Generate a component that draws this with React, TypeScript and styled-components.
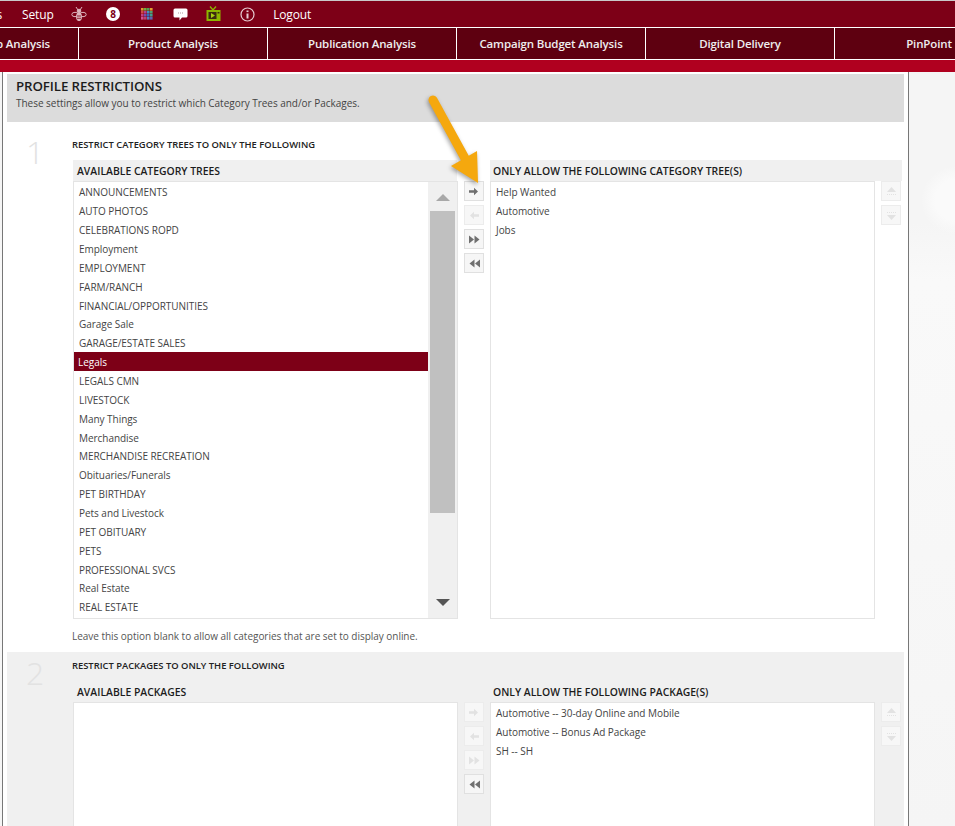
import { styled, createGlobalStyle } from "styled-components";

const GlobalStyle = createGlobalStyle`
    html, body {
        margin: 0;
        padding: 0;
        background: #fff;
        font-family: "Open Sans", "Noto Sans", sans-serif;
    }
    * {
        box-sizing: border-box;
    }
`;

const Page = styled.div`
    position: relative;
    width: 955px;
    height: 826px;
    overflow: hidden;
`;

const TopBar = styled.div`
    display: flex;
    align-items: center;
    height: 27px;
    border-top: 1px solid #c9c9c9;
    background: #7d0017;
    color: #fff;
    font-size: 12px;
    letter-spacing: -0.15px;
`;

const TopLink = styled.span<{ $start: number }>`
    margin-left: ${(p) => p.$start}px;
    white-space: nowrap;
`;

const IconRow = styled.div`
    display: grid;
    grid-auto-flow: column;
    grid-auto-columns: 33.6px;
    margin-left: 9px;
`;

const IconSlot = styled.div`
    display: flex;
    align-items: center;
    justify-content: center;
    height: 20px;
`;

const Badge = styled.span`
    display: flex;
    align-items: center;
    justify-content: center;
    width: 14px;
    height: 14px;
    border-radius: 50%;
    background: #fff;
    color: #7d0017;
    font-size: 10px;
    font-weight: 700;
`;

const NavBar = styled.div`
    display: flex;
    height: 33px;
    margin-left: -110px;
    border-top: 1px solid #fff;
    border-bottom: 1px solid #fff;
    background: #5e0010;
`;

const NavItem = styled.div`
    flex: 0 0 189px;
    display: flex;
    align-items: center;
    justify-content: center;
    border-right: 1px solid #fff;
    color: #eee;
    font-size: 11.5px;
    font-weight: 600;
    letter-spacing: -0.14px;
    white-space: nowrap;
`;

const RedStrip = styled.div`
    height: 12px;
    background: #b0001f;
`;

const Body = styled.div`
    display: flex;
    height: 754px;
    padding-left: 2px;
    background:
        radial-gradient(circle at 955px 128px, #fafafa 0, #fafafa 20px, rgba(250, 250, 250, 0) 34px),
        linear-gradient(180deg, #f5f5f5 0, #f5f5f5 150px, #f9f9f9 210px, #f5f5f5 100%);
`;

const Main = styled.main`
    flex: 0 0 907px;
    padding: 2px 4px 0;
    border-left: 1px solid #777;
    border-right: 1px solid #777;
    background: #fff;
`;

const Banner = styled.header`
    height: 48px;
    padding: 3px 9px 0;
    background: #dcdcdc;
`;

const BannerTitle = styled.h1`
    margin: 0;
    color: #1c1c1c;
    font-size: 13.3px;
    line-height: 19px;
    font-weight: 600;
    letter-spacing: -0.1px;
`;

const BannerText = styled.p`
    margin: 0;
    color: #444;
    font-size: 10px;
    line-height: 15px;
    letter-spacing: -0.03px;
`;

const Section = styled.section<{ $shaded?: boolean }>`
    display: grid;
    grid-template-columns: 65px 1fr;
    height: ${(p) => (p.$shaded ? "180px" : "530px")};
    padding-top: ${(p) => (p.$shaded ? "8px" : "17px")};
    background: ${(p) => (p.$shaded ? "#f0f0f0" : "#fff")};
`;

const StepNumber = styled.div`
    padding: 0 0 0 19px;
    color: #e2e2e2;
    font-size: 32px;
    line-height: 25px;
    font-weight: 300;
`;

const StepTitle = styled.h2<{ $gap: number }>`
    margin: 0 0 ${(p) => p.$gap}px;
    color: #222;
    font-size: 9.4px;
    line-height: 12px;
    font-weight: 600;
`;

const Transfer = styled.div`
    display: grid;
    grid-template-columns: 385px 32px 385px 27px;
    grid-template-rows: 21px auto;
    margin-left: 1px;
`;

const ColumnHeader = styled.div<{ $filled?: boolean; $wide?: boolean }>`
    grid-column: span 2;
    width: ${(p) => (p.$wide ? "412px" : "384px")};
    height: 21px;
    padding: 0 ${(p) => (p.$wide ? "3px" : "4px")};
    background: ${(p) => (p.$filled ? "#f0f0f0" : "transparent")};
    color: #1c1c1c;
    font-size: 10.4px;
    line-height: 23px;
    font-weight: 600;
`;

const ListBox = styled.div<{ $height: number }>`
    display: flex;
    height: ${(p) => p.$height}px;
    border: 1px solid #e4e4e4;
    background: #fff;
`;

const Items = styled.ul`
    flex: 1;
    margin: 0;
    padding: 0.4px 0 0;
    list-style: none;
`;

const Item = styled.li<{ $selected?: boolean }>`
    height: 18.87px;
    padding-left: ${(p) => (p.$selected ? "4px" : "5px")};
    background: ${(p) => (p.$selected ? "#7d0017" : "transparent")};
    color: ${(p) => (p.$selected ? "#fff" : "#444")};
    font-size: 10px;
    line-height: 20px;
    letter-spacing: -0.04px;
    white-space: nowrap;
`;

const Scrollbar = styled.div`
    flex: 0 0 29px;
    display: flex;
    flex-direction: column;
    background: #f0f0f0;
`;

const ScrollEnd = styled.div<{ $down?: boolean }>`
    flex: ${(p) => (p.$down ? "1" : "0 0 29px")};
    display: flex;
    align-items: ${(p) => (p.$down ? "flex-end" : "center")};
    justify-content: center;
    padding: ${(p) => (p.$down ? "0 0 12px 0" : "2px 0 0 0")};

    &::before {
        content: "";
        border-left: 7px solid transparent;
        border-right: 7px solid transparent;
        border-${(p) => (p.$down ? "top" : "bottom")}: 7px solid ${(p) => (p.$down ? "#555" : "#a8a8a8")};
    }
`;

const ScrollThumb = styled.div`
    flex: 0 0 302px;
    width: 25px;
    margin-left: 2px;
    background: #c0c0c0;
`;

const MoveColumn = styled.div`
    display: flex;
    flex-direction: column;
    gap: 4px;
    padding-left: 6px;
`;

const MoveButton = styled.button<{ $off?: boolean }>`
    display: flex;
    align-items: center;
    justify-content: center;
    width: 20px;
    height: 20px;
    padding: 0;
    border: 1px solid ${(p) => (p.$off ? "#ececec" : "#e0e0e0")};
    background: ${(p) => (p.$off ? "#f7f7f7" : "#f6f6f6")};
    color: ${(p) => (p.$off ? "#e2e2e2" : "#6f6f6f")};
`;

const Note = styled.p`
    margin: 10px 0 0;
    color: #555;
    font-size: 10px;
    line-height: 14px;
    letter-spacing: -0.03px;
`;

const Callout = styled.svg`
    position: absolute;
    left: 420px;
    top: 90px;
    width: 70px;
    height: 100px;
    filter: drop-shadow(-1px 2px 2px rgba(0, 0, 0, 0.35));
`;

type MoveKind = "right" | "left" | "allRight" | "allLeft" | "up" | "down";

const MoveIcon = ({ kind }: { kind: MoveKind }) => {
    const paths: Record<MoveKind, string> = {
        right: "M1 5.2h5V2.8L10 6.5l-4 3.7V7.8H1z",
        left: "M11 5.2H6V2.8L2 6.5l4 3.7V7.8h5z",
        allRight: "M1 2.5l5 4-5 4zM6.5 2.5l5 4-5 4z",
        allLeft: "M12 2.5l-5 4 5 4zM6.5 2.5l-5 4 5 4z",
        up: "M6.5 2l4.5 5H2zM2 9h1v1H2zM4 9h1v1H4zM6 9h1v1H6zM8 9h1v1H8zM10 9h1v1h-1z",
        down: "M6.5 11l4.5-5H2zM2 3h1v1H2zM4 3h1v1H4zM6 3h1v1H6zM8 3h1v1H8zM10 3h1v1h-1z",
    };
    return (
        <svg width="13" height="13" viewBox="0 0 13 13" fill="currentColor">
            <path d={paths[kind]} />
        </svg>
    );
};

const BeeIcon = () => (
    <svg width="16" height="16" viewBox="0 0 16 16" fill="none" stroke="#dcb4bc" strokeWidth="1">
        <path d="M5 1l2 3M11 1l-2 3" />
        <circle cx="8" cy="5" r="1.800" fill="#dcb4bc" />
        <ellipse cx="4" cy="8.500" rx="3.200" ry="2.200" />
        <ellipse cx="12" cy="8.500" rx="3.200" ry="2.200" />
        <ellipse cx="8" cy="10.800" rx="2.500" ry="4" fill="#dcb4bc" />
        <path d="M6 10h4M6 12.300h4" stroke="#7d0017" strokeWidth=".8" />
    </svg>
);

const ColorGridIcon = () => {
    const colors = [
        "#d8a030", "#6cb040", "#50a050", "#e0a030",
        "#d04848", "#b04090", "#4090c0", "#50a070",
        "#c04080", "#7050b0", "#3070c0", "#40a090",
        "#d05090", "#c04070", "#5080c0", "#6060b0",
    ];
    return (
        <svg width="12" height="12" viewBox="0 0 12 12">
            {colors.map((c, i) => (
                <rect key={i} x={(i % 4) * 3} y={Math.floor(i / 4) * 3} width="2.6" height="2.6" fill={c} />
            ))}
        </svg>
    );
};

const ChatIcon = () => (
    <svg width="15" height="14" viewBox="0 0 15 14">
        <path d="M2 1.500h11A1.500 1.500 0 0 1 14.500 3v6A1.500 1.500 0 0 1 13 10.500H9l-2.500 3v-3H2A1.500 1.500 0 0 1 .5 9V3A1.500 1.500 0 0 1 2 1.500z" fill="#fff" />
        <path d="M5 5.500h1v1H5zM7 5.500h1v1H7zM9 5.500h1v1H9z" fill="#b09aa0" />
    </svg>
);

const TvIcon = () => (
    <svg width="15" height="16" viewBox="0 0 15 16">
        <path d="M4 .5l3 3.500 3-3.500" fill="none" stroke="#8db600" strokeWidth="1.300" />
        <rect x=".5" y="4" width="14" height="11" fill="#8db600" />
        <rect x="2.500" y="6" width="8" height="7" fill="#3d2a10" />
        <path d="M5 7l4 2.500L5 12z" fill="#a8d010" />
        <rect x="11.500" y="6" width="2" height="1.500" fill="#3d2a10" />
    </svg>
);

const InfoIcon = () => (
    <svg width="15" height="15" viewBox="0 0 15 15" fill="none" stroke="#e6ccd2" strokeWidth="1.200">
        <circle cx="7.500" cy="7.500" r="6.500" />
        <path d="M7.500 6.500v5" strokeWidth="2" />
        <path d="M7.500 3.500v1.600" strokeWidth="2" />
    </svg>
);

const navItems = [
    "Advertisers Rep Analysis",
    "Product Analysis",
    "Publication Analysis",
    "Campaign Budget Analysis",
    "Digital Delivery",
    "PinPoint",
];

const categories = [
    "ANNOUNCEMENTS", "AUTO PHOTOS", "CELEBRATIONS ROPD", "Employment", "EMPLOYMENT",
    "FARM/RANCH", "FINANCIAL/OPPORTUNITIES", "Garage Sale", "GARAGE/ESTATE SALES", "Legals",
    "LEGALS CMN", "LIVESTOCK", "Many Things", "Merchandise", "MERCHANDISE RECREATION",
    "Obituaries/Funerals", "PET BIRTHDAY", "Pets and Livestock", "PET OBITUARY", "PETS",
    "PROFESSIONAL SVCS", "Real Estate", "REAL ESTATE",
];

const allowedTrees = ["Help Wanted", "Automotive", "Jobs"];

const allowedPackages = [
    "Automotive -- 30-day Online and Mobile",
    "Automotive -- Bonus Ad Package",
    "SH -- SH",
];

const MoveButtons = ({ kinds, off }: { kinds: MoveKind[]; off: MoveKind[] }) => (
    <MoveColumn>
        {kinds.map((kind) => (
            <MoveButton key={kind} $off={off.includes(kind)}>
                <MoveIcon kind={kind} />
            </MoveButton>
        ))}
    </MoveColumn>
);

const App = () => {
    const transferKinds: MoveKind[] = ["right", "left", "allRight", "allLeft"];
    const orderKinds: MoveKind[] = ["up", "down"];

    return (
        <Page>
            <GlobalStyle />
            <TopBar>
                <TopLink $start={-27}>Tools</TopLink>
                <TopLink $start={20}>Setup</TopLink>
                <IconRow>
                    <IconSlot><BeeIcon /></IconSlot>
                    <IconSlot><Badge>8</Badge></IconSlot>
                    <IconSlot><ColorGridIcon /></IconSlot>
                    <IconSlot><ChatIcon /></IconSlot>
                    <IconSlot><TvIcon /></IconSlot>
                    <IconSlot><InfoIcon /></IconSlot>
                </IconRow>
                <TopLink $start={9}>Logout</TopLink>
            </TopBar>
            <NavBar>
                {navItems.map((item) => (
                    <NavItem key={item}>{item}</NavItem>
                ))}
            </NavBar>
            <RedStrip />
            <Body>
                <Main>
                    <Banner>
                        <BannerTitle>PROFILE RESTRICTIONS</BannerTitle>
                        <BannerText>These settings allow you to restrict which Category Trees and/or Packages.</BannerText>
                    </Banner>
                    <Section>
                        <StepNumber>1</StepNumber>
                        <div>
                            <StepTitle $gap={9}>RESTRICT CATEGORY TREES TO ONLY THE FOLLOWING</StepTitle>
                            <Transfer>
                                <ColumnHeader $filled>AVAILABLE CATEGORY TREES</ColumnHeader>
                                <ColumnHeader $filled $wide>ONLY ALLOW THE FOLLOWING CATEGORY TREE(S)</ColumnHeader>
                                <ListBox $height={438}>
                                    <Items>
                                        {categories.map((name) => (
                                            <Item key={name} $selected={name === "Legals"}>{name}</Item>
                                        ))}
                                    </Items>
                                    <Scrollbar>
                                        <ScrollEnd />
                                        <ScrollThumb />
                                        <ScrollEnd $down />
                                    </Scrollbar>
                                </ListBox>
                                <MoveButtons kinds={transferKinds} off={["left"]} />
                                <ListBox $height={438}>
                                    <Items>
                                        {allowedTrees.map((name) => (
                                            <Item key={name}>{name}</Item>
                                        ))}
                                    </Items>
                                </ListBox>
                                <MoveButtons kinds={orderKinds} off={orderKinds} />
                            </Transfer>
                            <Note>Leave this option blank to allow all categories that are set to display online.</Note>
                        </div>
                    </Section>
                    <Section $shaded>
                        <StepNumber>2</StepNumber>
                        <div>
                            <StepTitle $gap={9}>RESTRICT PACKAGES TO ONLY THE FOLLOWING</StepTitle>
                            <Transfer>
                                <ColumnHeader>AVAILABLE PACKAGES</ColumnHeader>
                                <ColumnHeader $wide>ONLY ALLOW THE FOLLOWING PACKAGE(S)</ColumnHeader>
                                <ListBox $height={200} />
                                <MoveButtons kinds={transferKinds} off={["right", "left", "allRight"]} />
                                <ListBox $height={200}>
                                    <Items>
                                        {allowedPackages.map((name) => (
                                            <Item key={name}>{name}</Item>
                                        ))}
                                    </Items>
                                </ListBox>
                                <MoveButtons kinds={orderKinds} off={orderKinds} />
                            </Transfer>
                        </div>
                    </Section>
                </Main>
            </Body>
            <Callout viewBox="0 0 70 100">
                <path d="M13 10L47 72" stroke="#f5a80e" strokeWidth="9" strokeLinecap="round" fill="none" />
                <path d="M58 93L31 76L57 61z" fill="#f5a80e" />
            </Callout>
        </Page>
    );
};

export default App;
